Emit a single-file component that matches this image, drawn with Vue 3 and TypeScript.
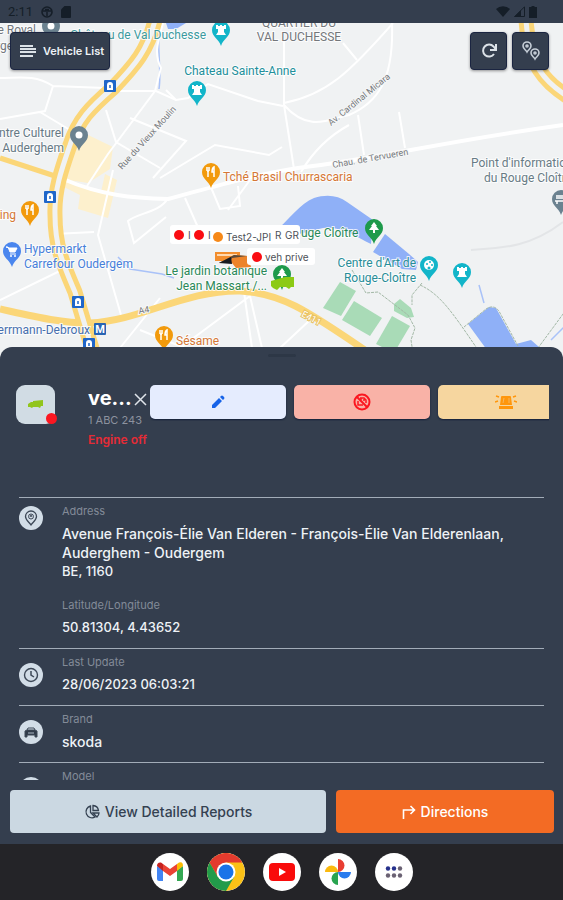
<script setup lang="ts">
interface Pin { x: number; y: number; color: string; kind: string }
interface Place { x: number; y: number; text: string; color: string; anchor?: 'start' | 'middle' | 'end' }
interface Detail { icon: string; fields: { label: string; lines: string[] }[] }

const teal = '#12b5c9'
const orange = '#f29a0c'
const slate = '#6b8290'
const green = '#1e9a4b'

const pins: Pin[] = [
  { x: 221, y: 46, color: teal, kind: 'castle' },
  { x: 197, y: 106, color: teal, kind: 'castle' },
  { x: 51, y: 42, color: slate, kind: 'dot' },
  { x: 79, y: 151, color: slate, kind: 'dot' },
  { x: 211, y: 188, color: orange, kind: 'food' },
  { x: 30, y: 226, color: orange, kind: 'food' },
  { x: 12, y: 267, color: '#4a86ee', kind: 'cart' },
  { x: 164, y: 351, color: orange, kind: 'food' },
  { x: 374, y: 244, color: green, kind: 'tree' },
  { x: 429, y: 281, color: teal, kind: 'art' },
  { x: 462, y: 288, color: teal, kind: 'castle' },
  { x: 561, y: 215, color: slate, kind: 'bench' },
  { x: 282, y: 290, color: green, kind: 'tree' },
]

const places: Place[] = [
  { x: 36, y: 34, text: 'e Royal', color: '#72777d', anchor: 'end' },
  { x: 13, y: 50, text: 'rge', color: '#72777d', anchor: 'end' },
  { x: 206, y: 39, text: 'Château de Val Duchesse', color: '#3c9a9f', anchor: 'end' },
  { x: 299, y: 27, text: 'QUARTIER DU', color: '#74777b', anchor: 'middle' },
  { x: 299, y: 41, text: 'VAL DUCHESSE', color: '#74777b', anchor: 'middle' },
  { x: 240, y: 75, text: 'Chateau Sainte-Anne', color: '#218f9b', anchor: 'middle' },
  { x: 64, y: 137, text: 'Centre Culturel', color: '#667985', anchor: 'end' },
  { x: 64, y: 152, text: 'Auderghem', color: '#667985', anchor: 'end' },
  { x: 223, y: 181, text: 'Tché Brasil Churrascaria', color: '#d57735' },
  { x: 16, y: 219, text: 'King', color: '#d57735', anchor: 'end' },
  { x: 24, y: 253, text: 'Hypermarkt', color: '#477fda' },
  { x: 24, y: 268, text: 'Carrefour Oudergem', color: '#477fda' },
  { x: 90, y: 334, text: 'Herrmann-Debroux', color: '#476fae', anchor: 'end' },
  { x: 176, y: 345, text: 'Sésame', color: '#d57735' },
  { x: 267, y: 275, text: 'Le jardin botanique', color: '#298858', anchor: 'end' },
  { x: 267, y: 290, text: 'Jean Massart /...', color: '#298858', anchor: 'end' },
  { x: 301, y: 237, text: 'uge Cloître', color: '#298858' },
  { x: 416, y: 267, text: "Centre d'Art de", color: '#288d98', anchor: 'end' },
  { x: 416, y: 282, text: 'Rouge-Cloître', color: '#288d98', anchor: 'end' },
  { x: 471, y: 167, text: "Point d'information", color: '#687b85' },
  { x: 484, y: 182, text: 'du Rouge Cloître', color: '#687b85' },
]

const tunnels = [[110, 86], [50, 197], [78, 302], [89, 344]]

const details: Detail[] = [
  {
    icon: 'pin',
    fields: [
      {
        label: 'Address',
        lines: ['Avenue François-Élie Van Elderen - François-Élie Van Elderenlaan, Auderghem - Oudergem', 'BE, 1160'],
      },
      { label: 'Latitude/Longitude', lines: ['50.81304, 4.43652'] },
    ],
  },
  { icon: 'clock', fields: [{ label: 'Last Update', lines: ['28/06/2023 06:03:21'] }] },
  { icon: 'car', fields: [{ label: 'Brand', lines: ['skoda'] }] },
  { icon: 'car', fields: [{ label: 'Model', lines: [] }] },
]

const hasDigits = (line: string): boolean => /\d/.test(line)
</script>

<template>
  <div class="app">
    <header class="status">
      <div class="status-group">
        <span>2:11</span>
        <svg width="12" height="12" viewBox="0 0 12 12"><circle cx="6" cy="6" r="5" fill="none" stroke="currentColor" stroke-width="1.6" /><path d="M2 5h8M6 6v4M4 3.5h4" fill="none" stroke="currentColor" stroke-width="1.5" /></svg>
        <svg width="10" height="12" viewBox="0 0 10 12"><path d="M3.5 0H9a1 1 0 0 1 1 1v10a1 1 0 0 1-1 1H1a1 1 0 0 1-1-1V3.5z" fill="currentColor" /></svg>
      </div>
      <div class="status-group right">
        <svg width="14" height="11" viewBox="0 0 14 11"><path d="M0 3a10 10 0 0 1 14 0L7 11z" fill="currentColor" /></svg>
        <svg width="11" height="11" viewBox="0 0 11 11"><path d="M10.500 .8v9.700H.8z" fill="none" stroke="currentColor" /><path d="M7 4v7H0z" fill="currentColor" /></svg>
        <svg width="8" height="12" viewBox="0 0 8 12"><path d="M2.500 0h3v1H8v11H0V1h2.500z" fill="currentColor" /></svg>
      </div>
    </header>

    <main class="map">
      <svg class="map-canvas" viewBox="0 23 563 338" preserveAspectRatio="xMidYMin slice" role="img" aria-label="Map">
        <rect y="23" width="563" height="338" fill="#f0f2f3" />
        <g fill="#fdf0cd">
          <path d="M84 133l29 14-3 22-22 14-26-4 10-32z" />
          <path d="M66 178l35 14 4-18 12 6-9 38-30-9 2-14-16-8z" />
        </g>
        <g fill="#8fb0f7">
          <path d="M280 227c10-9 20-23 34-29 12-4 24-3 33 4l26 18-2 24c-15-7-28-18-48-16l-40 10z" />
          <path d="M385 234l24 20 9 8-2 8-14-1-29-17z" />
          <path d="M468 324l21-17 7 1 20 36 15-4 8 7-10 14h-34z" />
          <path d="M166 23h20l-10 6h-8z" />
        </g>
        <g fill="#a9dbb7">
          <path d="M340 282l16 9-15 25-18-8z" />
          <path d="M354 301l28 17-12 18-28-16z" />
          <path d="M392 316l18 10-16 27-18-9z" />
          <path d="M394 304l6-5 11 9 3 9-7 1-13-7z" />
        </g>
        <g fill="none" stroke="#a3b8a6" stroke-width="1" stroke-dasharray="3 1">
          <path d="M352 270l14 23 12-1 30 23 7 13-4 12 3 20M420 285c20 9 32 27 56 62M464 327l22-18c6-4 11-2 14 4l18 33M538 348l28-38" />
          <path d="M422 283l-10 12v10" />
        </g>
        <path d="M160 23c-4 20 2 48-1 66M118 257l12 12 32 5 12 4M479 285l5 18M551 340l14-14" fill="none" stroke="#a9c2f8" stroke-width="1.500" />
        <g fill="none" stroke="#fff" stroke-width="2">
          <path d="M0 78c18 0 34-4 53 8l52 2M53 86l-8 25-45 8M40 112l30 18M118 91l38 0 20 9 12-2 20-14 50 17 25 5" />
          <path d="M163 23c-4 16-10 30-2 45l-6 23-47 63-21 32M130 118l56 23-33 37M106 110l10 32 44 26M176 100l-10-10" />
          <path d="M284 103c42-8 65-30 109-80M284 40v65l10 64M284 105c25 28 45 14 65 10 28-12 45-34 43-92" />
          <path d="M343 43l14 17M358 115l6 40M399 112l6 36M349 125c-22 12-38 30-48 47M160 178l55-33 54 10 13-8" />
          <path d="M113 170l-15 65 23 80M0 300l70-34M168 198c-8 15-32 15-40 23l6 22 32-26M185 198l15 34M210 185l10 24 20-3-2-20M250 180l-22 30" />
          <path d="M120 348l40-50M140 330l45 18M180 348l70-52 12 52M244 292l8 56M310 320l-30 28M54 234l40-2" />
        </g>
        <path d="M63 179c40 17 70 19 105 20 45-12 85-24 130-31 85-10 130-24 265-43" fill="none" stroke="#fff" stroke-width="4" />
        <path d="M471 250c30-2 58-2 92-28" fill="none" stroke="#e3e5e7" stroke-width="2" />
        <g fill="none" stroke="#fbd678">
          <path d="M0 158l58 19" stroke-width="5" />
          <path d="M0 309c32 7 60 14 90 14 50-2 95-33 150-32 40 2 64 17 132 64" stroke-width="7" />
          <path d="M155 20c-7 30-20 45-42 68-23 20-35 32-43 57-8 23-16 45-15 70 0 30 7 47 20 77l18 60" stroke-width="15" />
          <path d="M526 20c3 45 18 62 44 78" stroke-width="15" />
        </g>
        <g fill="none" stroke="#f0f2f3" stroke-width="5">
          <path d="M155 20c-7 30-20 45-42 68-23 20-35 32-43 57-8 23-16 45-15 70 0 30 7 47 20 77l18 60" />
          <path d="M526 20c3 45 18 62 44 78" />
        </g>

        <g v-for="t in tunnels" :key="t[1]" :transform="`translate(${t[0]} ${t[1]})`">
          <rect x="-6" y="-6" width="12" height="12" rx="1" fill="#1f66c9" />
          <path d="M-3 4v-5a3 3 0 0 1 6 0v5z" fill="#fff" /><path d="M0-1v3" stroke="#1f66c9" stroke-width="1.500" />
        </g>
        <rect x="94" y="323" width="12" height="12" rx="1" fill="#2864b4" />
        <text x="100" y="333" class="metro" text-anchor="middle">M</text>

        <text v-for="p in places" :key="p.text" class="place" :x="p.x" :y="p.y" :fill="p.color" :text-anchor="p.anchor ?? 'start'">{{ p.text }}</text>
        <text class="road" transform="translate(122 170) rotate(-48)">Rue du Vieux Moulin</text>
        <text class="road" transform="translate(331 126) rotate(-39)">Av. Cardinal Micara</text>
        <text class="road" transform="translate(333 168) rotate(-10)">Chau. de Tervueren</text>
        <text class="road" transform="translate(139 314) rotate(-10)">A4</text>
        <text class="road shield" transform="translate(301 316) rotate(28)">E411</text>

        <g v-for="(p, i) in pins" :key="i" :transform="`translate(${p.x} ${p.y})`">
          <path d="M0 0C-2-7-9-9-9-16a9 9 0 1 1 18 0c0 7-7 9-9 16z" :fill="p.color" />
          <path v-if="p.kind === 'castle'" d="M-5-21h2v1h2v-1h2v1h2v-1h2v4h-2v3l2 3H-5l2-3v-3h-2z" fill="#fff" />
          <circle v-else-if="p.kind === 'dot'" cy="-16" r="3.500" fill="#fff" />
          <path v-else-if="p.kind === 'food'" d="M-4-21v4M-2-21v4M-4-17h2M-3-17v6M3-11v-10c-2 1-2 4-2 5h2" fill="none" stroke="#fff" stroke-width="1.500" />
          <g v-else-if="p.kind === 'cart'"><path d="M-6-20h2l2 5h5l2-4h-8zM-2-13h6" fill="#fff" stroke="#fff" /><circle cx="-1" cy="-11" r="1" fill="#fff" /><circle cx="3" cy="-11" r="1" fill="#fff" /></g>
          <path v-else-if="p.kind === 'tree'" d="M0-22l3 4H2l3 4H1v3h-2v-3h-4l3-4h-1z" fill="#fff" />
          <g v-else-if="p.kind === 'art'"><circle cy="-16" r="5" fill="#fff" /><g :fill="p.color"><circle cx="-2" cy="-17" r="1" /><circle cx="1" cy="-19" r="1" /><circle cx="3" cy="-16" r="1" /><circle cx="0" cy="-13" r="1.500" /></g></g>
          <path v-else d="M-5-19h10M-5-17h10M-6-14H6M-4-14v3M4-14v3" stroke="#fff" stroke-width="1.500" fill="none" />
        </g>

        <g class="tags">
          <rect x="170" y="225" width="130" height="19" rx="3" fill="#fff" />
          <path d="M215 252h25v9h-25z" fill="#f28d2c" /><path d="M217 255h20" stroke="#ffd8ae" stroke-width="2" />
          <path d="M219 263l15-8 14 1 3 11-15 1-4-5z" fill="#ec842a" /><path d="M219 263l15-8 13 1-15 2-3 5z" fill="#5a4938" /><path d="M219 263l12-6 1 7z" fill="#181b20" />
          <rect x="247" y="248" width="68" height="17" rx="3" fill="#fff" />
          <circle cx="179" cy="235" r="5" fill="#fa0d13" /><circle cx="199" cy="235" r="5" fill="#fa0d13" />
          <circle cx="218" cy="237" r="5" fill="#f68919" /><circle cx="257" cy="257" r="5" fill="#fa0d13" />
          <text x="188" y="239">I</text><text x="208" y="239">I</text>
          <text x="226" y="241">Test2-JPI</text><text x="275" y="239">R</text><text x="285" y="239">GR</text><text x="265" y="261">veh prive</text>
          <path d="M271 281l14-4h9v10h-3l-2 2-3-2h-6l-3 3-4-2-2-2z" fill="#8cca14" />
        </g>
      </svg>

      <div class="map-controls">
        <button class="map-button list" type="button">
          <svg width="16" height="14" viewBox="0 0 16 14"><path d="M0 2h13M0 5h16M0 8h16M0 12h13" stroke="#dce2e8" stroke-width="2" /></svg>
          Vehicle List
        </button>
        <button class="map-button square" type="button" aria-label="Refresh">
          <svg width="18" height="18" viewBox="0 0 18 18" fill="none" stroke="#dce2e8" stroke-width="2"><path d="M14 12a6 6 0 1 1-.5-7.500L15.500 7M16 2v6h-6" /></svg>
        </button>
        <button class="map-button square" type="button" aria-label="Vehicle positions">
          <svg width="20" height="20" viewBox="0 0 20 20" fill="none" stroke="#c6ced7" stroke-width="1.600"><path d="M6 11C5 9 2 8 2 5a4 4 0 0 1 8 0c0 3-3 4-4 6zM14 18c-1-2-4-3-4-6a4 4 0 0 1 8 0c0 3-3 4-4 6z" /><circle cx="6" cy="5" r="1" /><circle cx="14" cy="12" r="1" /></svg>
        </button>
      </div>
    </main>

    <section class="sheet">
      <div class="handle"></div>
      <div class="summary">
        <div class="avatar">
          <svg width="16" height="9" viewBox="0 0 16 9"><path d="M0 4l3-2h2V1l10-1v6h-2l-1 2-2-1H5L4 8 2 7H0z" fill="#91c51c" /></svg>
          <i class="badge"></i>
        </div>
        <div class="identity">
          <div class="name-row">
            <h1>ve...</h1>
            <button class="close" type="button" aria-label="Close">
              <svg width="13" height="13" viewBox="0 0 13 13"><path d="M1 1l11 11M12 1L1 12" stroke="#dfe4ea" stroke-width="1.500" /></svg>
            </button>
          </div>
          <p class="plate">1 ABC 243</p>
          <p class="engine">Engine off</p>
        </div>
        <div class="actions">
          <button class="action edit" type="button" aria-label="Edit">
            <svg width="14" height="14" viewBox="0 0 14 14" fill="#1763e8"><path d="M1 10l7-7 3 3-7 7H1zM9 2l1-1q1-1 2 0l1 1q1 1 0 2l-1 1z" /></svg>
          </button>
          <button class="action block" type="button" aria-label="Immobilize">
            <svg width="18" height="18" viewBox="0 0 18 18" fill="none" stroke="#fb1720"><circle cx="9" cy="9" r="7.500" stroke-width="2" /><path d="M4 4l10 10" stroke-width="2" /><path d="M7 5h4l2 2v3M5 8v4h5M8 5v2M10 7h2" stroke-width="1.500" /></svg>
          </button>
          <button class="action alarm" type="button" aria-label="Alarm">
            <svg width="22" height="16" viewBox="0 0 22 16" fill="#ff960b"><path d="M5 11l1-8q0-1 1-1h8q1 0 1 1l1 8zM4 12h14v3H4z" /><path d="M1 2l3 1M0 8l3-1M21 2l-3 1M22 8l-3-1" stroke="#ff960b" stroke-width="1.500" /><path d="M9 4L8 9M14 4v5" stroke="#f6b65c" /></svg>
          </button>
        </div>
      </div>

      <div class="details">
        <article v-for="(row, i) in details" :key="i" class="detail" :class="{ tall: row.fields.length > 1 }">
          <span class="detail-icon">
            <svg width="16" height="16" viewBox="0 0 16 16" fill="none" stroke="#3d4857">
              <template v-if="row.icon === 'pin'"><path d="M8 15C6 12 2.500 10 2.500 6.500a5.500 5.500 0 0 1 11 0C13.500 10 10 12 8 15z" stroke-width="1.300" /><circle cx="8" cy="6.500" r="2.500" /><path d="M7 7l1-2 1 2" /></template>
              <template v-else-if="row.icon === 'clock'"><circle cx="8" cy="8" r="6.500" stroke-width="1.400" /><path d="M8 4v4l3 2" stroke-width="1.500" /></template>
              <template v-else><path d="M4 6l1-2h6l1 2" /><path d="M2 7l2-1h8l2 1v6h-2v-2H4v2H2z" fill="#303b4a" /><path d="M5 9h6" stroke="#aab8c5" /></template>
            </svg>
          </span>
          <dl>
            <div v-for="f in row.fields" :key="f.label" class="field">
              <dt>{{ f.label }}</dt>
              <dd v-for="l in f.lines" :key="l" :class="{ figures: hasDigits(l) }">{{ l }}</dd>
            </div>
          </dl>
        </article>
      </div>

      <footer class="footer">
        <button class="cta reports" type="button">
          <svg width="16" height="16" viewBox="0 0 16 16" fill="none" stroke="currentColor" stroke-width="1.300"><path d="M6.500 2A6 6 0 1 0 11 13L6.500 8.500zM9 1.500v5h5.500A6 6 0 0 0 9 1.500zM9 9h6q0 2-2 4z" /></svg>
          View Detailed Reports
        </button>
        <button class="cta directions" type="button">
          <svg width="14" height="14" viewBox="0 0 14 14" fill="none" stroke="currentColor" stroke-width="1.600"><path d="M1.500 14V5H12M8.500 1L12.500 5l-4 4" /></svg>
          Directions
        </button>
      </footer>
    </section>

    <nav class="dock" aria-label="Apps">
      <button type="button" aria-label="Gmail">
        <svg width="26" height="20" viewBox="0 0 26 20"><path d="M0 4v13q0 2 2 2h4V8z" fill="#4285f4" /><path d="M20 8v11h4q2 0 2-2V4z" fill="#34a853" /><path d="M20 2v7l6-5q0-5-4-3.500z" fill="#fbbc04" /><path d="M6 2v7l7 5 7-5V2l-7 5z" fill="#ea4335" /><path d="M0 4l6 5V2L4 .5Q0 0 0 4z" fill="#c5221f" /></svg>
      </button>
      <button type="button" aria-label="Chrome">
        <svg width="38" height="38" viewBox="0 0 38 38"><circle cx="19" cy="19" r="19" fill="#fbc116" /><path d="M2.500 9.500A19 19 0 0 1 35.500 9.500H19l-8.200 14.200z" fill="#e33b2e" /><path d="M2.500 9.500A19 19 0 0 0 19 38l8.200-14.300H10.800z" fill="#229b4a" /><circle cx="19" cy="19" r="9.500" fill="#fff" /><circle cx="19" cy="19" r="7.500" fill="#1a73e8" /></svg>
      </button>
      <button type="button" aria-label="YouTube">
        <svg width="26" height="18" viewBox="0 0 26 18"><rect width="26" height="18" rx="4" fill="#f90b0b" /><path d="M10 5l7 4-7 4z" fill="#fff" /></svg>
      </button>
      <button type="button" aria-label="Photos">
        <svg width="28" height="28" viewBox="0 0 28 28"><path d="M14 1a6.500 6.500 0 0 1 0 13z" fill="#e83d32" /><path d="M27 14a6.500 6.500 0 0 1-13 0z" fill="#2b7cee" /><path d="M14 27a6.500 6.500 0 0 1 0-13z" fill="#29a450" /><path d="M1 14a6.500 6.500 0 0 1 13 0z" fill="#fbb90e" /></svg>
      </button>
      <button type="button" aria-label="All apps">
        <svg width="18" height="12" viewBox="0 0 18 12"><g fill="#26318c"><circle cx="3" cy="2.500" r="2.200" /><circle cx="9" cy="2.500" r="2.200" /></g><g fill="#6a6173"><circle cx="15" cy="2.500" r="2.200" /><circle cx="3" cy="9.500" r="2.200" /><circle cx="9" cy="9.500" r="2.200" /><circle cx="15" cy="9.500" r="2.200" /></g></svg>
      </button>
    </nav>
  </div>
</template>

<style>
body {
  margin: 0;
  background: #242428;
}
</style>

<style scoped>
.app {
  height: 100vh;
  display: flex;
  flex-direction: column;
  overflow: hidden;
  font-family: Inter, "Open Sans", sans-serif;
  color: #eef2f6;
}
button {
  border: 0;
  padding: 0;
  font: inherit;
  color: inherit;
  cursor: pointer;
}
svg {
  display: block;
}
.status {
  flex: none;
  height: 23px;
  box-sizing: border-box;
  padding: 0 26px 0 8px;
  display: flex;
  align-items: center;
  justify-content: space-between;
  background: #343e4e;
  color: #151e28;
  font: 13px Roboto, sans-serif;
}
.status-group {
  display: flex;
  align-items: center;
  gap: 8px;
}
.status-group.right {
  gap: 4px;
}
.map {
  flex: none;
  position: relative;
  height: calc(36vh + 14px);
  background: #f0f2f3;
}
.map-canvas {
  width: 100%;
  height: 100%;
}
.place {
  font: 12px Roboto, sans-serif;
  paint-order: stroke;
  stroke: #fff;
  stroke-width: 2px;
  stroke-opacity: 0.8;
}
.road {
  font: 9px Roboto, sans-serif;
  fill: #777a7e;
  paint-order: stroke;
  stroke: #f6f7f7;
  stroke-width: 2px;
}
.shield {
  fill: #fff;
  stroke: #e9c15f;
}
.metro {
  font: bold 11px Roboto, sans-serif;
  fill: #fff;
}
.tags text {
  font: 10px Inter, sans-serif;
  fill: #4d5157;
}
.map-controls {
  position: absolute;
  top: 9px;
  left: 10px;
  right: 14px;
  display: flex;
  gap: 5px;
}
.map-button {
  height: 38px;
  display: flex;
  align-items: center;
  justify-content: center;
  gap: 7px;
  border-radius: 4px;
  background: #343e4e;
  border: 1px solid #1b2541;
  box-shadow: 0 1px 3px #0006;
}
.list {
  padding: 0 5px 0 9px;
  margin-right: auto;
  font-size: 11px;
  font-weight: 600;
}
.square {
  width: 37px;
}
.sheet {
  flex: 1;
  min-height: 0;
  margin-top: -14px;
  position: relative;
  display: flex;
  flex-direction: column;
  background: #343e4e;
  border-radius: 12px 12px 0 0;
}
.handle {
  flex: none;
  width: 28px;
  height: 3px;
  margin: 7px auto 28px;
  border-radius: 2px;
  background: #2d3746;
}
.summary {
  flex: none;
  display: flex;
  align-items: flex-start;
  height: 112px;
  padding: 0 14px 0 16px;
}
.avatar {
  position: relative;
  flex: none;
  width: 39px;
  height: 39px;
  margin-right: 33px;
  display: grid;
  place-items: center;
  border-radius: 9px;
  background: #d1dce4;
}
.badge {
  position: absolute;
  right: -2px;
  bottom: 0;
  width: 11px;
  height: 11px;
  border-radius: 50%;
  background: #fb1721;
}
.identity {
  flex: none;
  width: 62px;
  white-space: nowrap;
}
.name-row {
  display: flex;
  align-items: center;
  justify-content: space-between;
  height: 25px;
  padding-right: 3px;
}
h1 {
  margin: 0;
  font-size: 20px;
  line-height: 24px;
  font-weight: 700;
  color: #fff;
}
.close {
  margin-top: 3px;
  background: none;
}
.plate,
.engine {
  margin: 0;
  font-size: 11px;
  line-height: 20px;
  color: #8c929e;
}
.engine {
  font-size: 12px;
  font-weight: 600;
  color: #e52b36;
}
.actions {
  flex: 1;
  min-width: 0;
  display: flex;
  gap: 8px;
  overflow: hidden;
  padding-bottom: 2px;
}
.action {
  flex: none;
  width: 136px;
  height: 34px;
  display: grid;
  place-items: center;
  border-radius: 5px;
  box-shadow: 0 1px 2px #14203a;
}
.edit {
  background: #e5ecfe;
}
.block {
  background: #f9b2a7;
}
.alarm {
  background: #f6d69f;
}
.details {
  flex: 1;
  min-height: 0;
  margin: 0 19px;
  overflow-y: auto;
  scrollbar-width: none;
}
.detail {
  display: flex;
  gap: 19px;
  border-top: 1px solid #a2acb8;
  padding: 5px 0 11px;
}
.detail-icon {
  flex: none;
  width: 24px;
  height: 24px;
  margin-top: 9px;
  display: grid;
  place-items: center;
  border-radius: 50%;
  background: #d2dde7;
}
.tall .detail-icon {
  margin-top: 3px;
}
dl {
  margin: 0;
  flex: 1;
  min-width: 0;
}
.field + .field {
  margin-top: 16px;
}
dt {
  margin-bottom: 5px;
  font-size: 11px;
  line-height: 16px;
  color: #838b98;
}
dd {
  margin: 0;
  font-size: 14px;
  line-height: 19px;
  font-weight: 500;
}
.figures {
  font-size: 13px;
}
.footer {
  flex: none;
  display: grid;
  grid-template-columns: 1.45fr 1fr;
  gap: 10px;
  padding: 10px 9px 11px 10px;
}
.cta {
  height: 43px;
  display: flex;
  align-items: center;
  justify-content: center;
  gap: 5px;
  border-radius: 4px;
  font-size: 14px;
  font-weight: 500;
}
.reports {
  background: #cbd8e2;
  color: #344151;
}
.directions {
  background: #f36b24;
  color: #fff;
}
.dock {
  flex: none;
  height: 56px;
  display: flex;
  align-items: center;
  justify-content: center;
  gap: 18px;
  background: #242428;
}
.dock button {
  width: 38px;
  height: 38px;
  display: grid;
  place-items: center;
  border-radius: 50%;
  overflow: hidden;
  background: #fff;
}
</style>
